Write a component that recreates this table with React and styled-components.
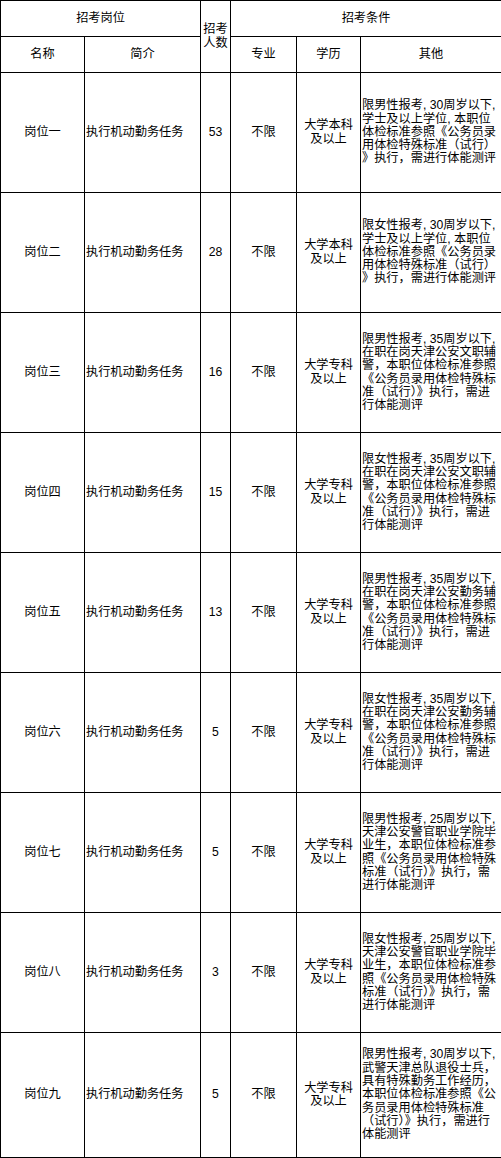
import React from 'react';
import styled, {createGlobalStyle} from 'styled-components';

const GlobalStyle = createGlobalStyle`
    html, body {
        margin: 0;
        padding: 0;
        background: #fff;
    }
`;

const Table = styled.table`
    border-collapse: collapse;
    table-layout: fixed;
    width: 501px;
    font-family: "Liberation Sans", "Noto Sans CJK SC", sans-serif;
    font-size: 12.2px;
    line-height: 13.3px;
    color: #000;
    background: #fff;
`;

const Row = styled.tr`
    height: ${props => props.$height}px;
`;

const HeadCell = styled.th`
    border: 1px solid #000;
    padding: 0;
    font-weight: normal;
    text-align: center;
    vertical-align: middle;
`;

const Cell = styled.td`
    border: 1px solid #000;
    padding: 0 ${props => props.$align === 'left' ? '1px' : '0'};
    text-align: ${props => props.$align || 'center'};
    vertical-align: middle;
    white-space: pre;
`;

const Line = styled.div`
    display: block;
`;

const jobs = [
    {name: '岗位一', count: 53, edu: '大学本科', notes: ['限男性报考, 30周岁以下,', '学士及以上学位, 本职位', '体检标准参照《公务员录', '用体检特殊标准（试行）', '》执行，需进行体能测评']},
    {name: '岗位二', count: 28, edu: '大学本科', notes: ['限女性报考, 30周岁以下,', '学士及以上学位, 本职位', '体检标准参照《公务员录', '用体检特殊标准（试行）', '》执行，需进行体能测评']},
    {name: '岗位三', count: 16, edu: '大学专科', notes: ['限男性报考, 35周岁以下,', '在职在岗天津公安文职辅', '警，本职位体检标准参照', '《公务员录用体检特殊标', '准（试行）》执行，需进', '行体能测评']},
    {name: '岗位四', count: 15, edu: '大学专科', notes: ['限女性报考, 35周岁以下,', '在职在岗天津公安文职辅', '警，本职位体检标准参照', '《公务员录用体检特殊标', '准（试行）》执行，需进', '行体能测评']},
    {name: '岗位五', count: 13, edu: '大学专科', notes: ['限男性报考, 35周岁以下,', '在职在岗天津公安勤务辅', '警，本职位体检标准参照', '《公务员录用体检特殊标', '准（试行）》执行，需进', '行体能测评']},
    {name: '岗位六', count: 5, edu: '大学专科', notes: ['限女性报考, 35周岁以下,', '在职在岗天津公安勤务辅', '警，本职位体检标准参照', '《公务员录用体检特殊标', '准（试行）》执行，需进', '行体能测评']},
    {name: '岗位七', count: 5, edu: '大学专科', notes: ['限男性报考, 25周岁以下,', '天津公安警官职业学院毕', '业生，本职位体检标准参', '照《公务员录用体检特殊', '标准（试行）》执行，需', '进行体能测评']},
    {name: '岗位八', count: 3, edu: '大学专科', notes: ['限女性报考, 25周岁以下,', '天津公安警官职业学院毕', '业生，本职位体检标准参', '照《公务员录用体检特殊', '标准（试行）》执行，需', '进行体能测评']},
    {name: '岗位九', count: 5, edu: '大学专科', notes: ['限男性报考, 30周岁以下,', '武警天津总队退役士兵，', '具有特殊勤务工作经历，', '本职位体检标准参照《公', '务员录用体检特殊标准', '（试行）》执行，需进行', '体能测评'], height: 125},
];

export default function App() {
    return (
        <>
            <GlobalStyle />
            <Table>
                <colgroup>
                    <col style={{width: 84}} />
                    <col style={{width: 116}} />
                    <col style={{width: 30}} />
                    <col style={{width: 66}} />
                    <col style={{width: 64}} />
                    <col style={{width: 141}} />
                </colgroup>
                <thead>
                    <Row $height={36}>
                        <HeadCell colSpan={2}>招考岗位</HeadCell>
                        <HeadCell rowSpan={2}><Line>招考</Line><Line>人数</Line></HeadCell>
                        <HeadCell colSpan={3}>招考条件</HeadCell>
                    </Row>
                    <Row $height={36}>
                        <HeadCell>名称</HeadCell>
                        <HeadCell>简介</HeadCell>
                        <HeadCell>专业</HeadCell>
                        <HeadCell>学历</HeadCell>
                        <HeadCell>其他</HeadCell>
                    </Row>
                </thead>
                <tbody>
                    {jobs.map((job, index) => (
                        <Row key={index.toString()} $height={job.height || 120}>
                            <Cell>{job.name}</Cell>
                            <Cell $align="left">执行机动勤务任务</Cell>
                            <Cell>{job.count}</Cell>
                            <Cell>不限</Cell>
                            <Cell><Line>{job.edu}</Line><Line>及以上</Line></Cell>
                            <Cell $align="left">
                                {job.notes.map((line, i) => <Line key={i}>{line}</Line>)}
                            </Cell>
                        </Row>
                    ))}
                </tbody>
            </Table>
        </>
    );
}
